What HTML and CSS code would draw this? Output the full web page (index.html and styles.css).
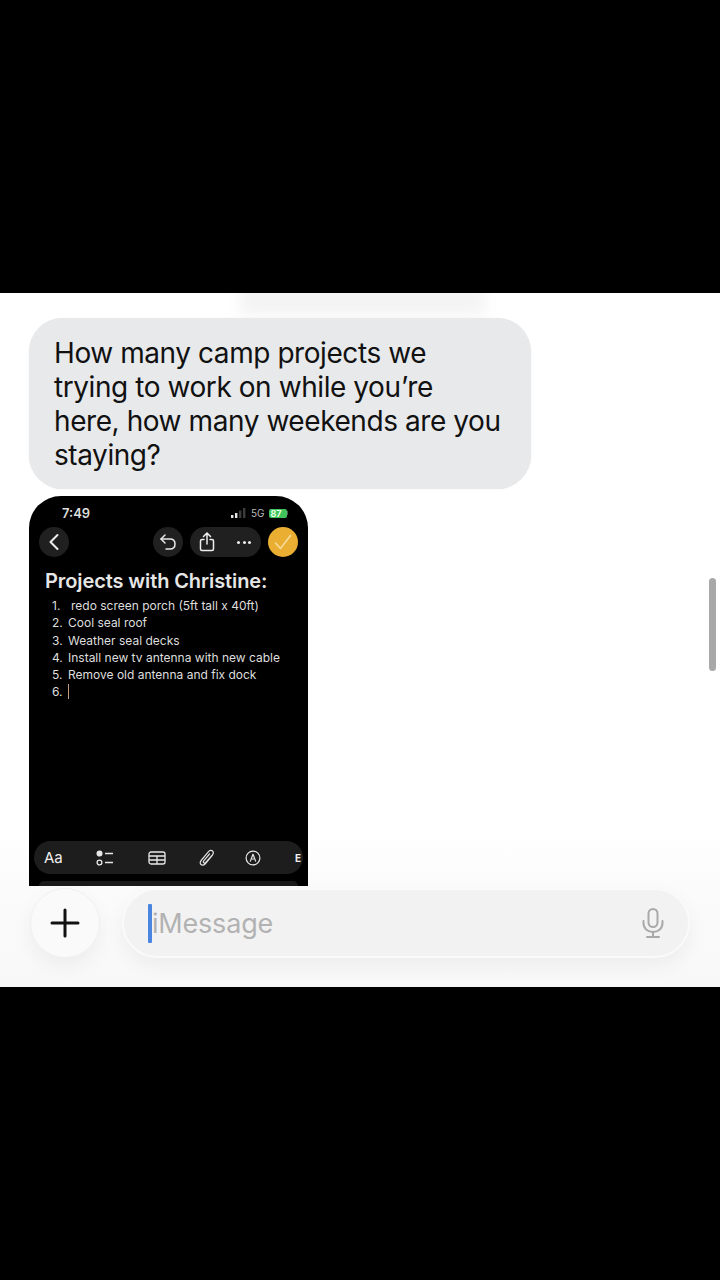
FILE: index.html
```html
<!DOCTYPE html>
<html lang="en">
<head>
<meta charset="utf-8">
<title>Messages</title>
<link rel="stylesheet" href="styles.css">
</head>
<body>
<div class="band-top"></div>
<main class="screen">
  <div class="top-glow"></div>
  <div class="thread">
    <p class="bubble">How many camp projects we<br>trying to work on while you’re<br>here, how many weekends are you<br>staying?</p>
    <div class="shot">
      <div class="status">
        <span class="time">7:49</span>
        <span class="status-right">
          <svg class="signal" width="16" height="10" viewBox="0 0 16 10"><rect x="0" y="7" width="2.4" height="3" fill="#e6e6e6"/><rect x="4" y="5" width="2.4" height="5" fill="#e6e6e6"/><rect x="8" y="2.5" width="2.4" height="7.5" fill="#3c3c3c"/><rect x="12" y="0" width="2.4" height="10" fill="#3c3c3c"/></svg>
          <span class="net">5G</span>
          <span class="batt">87</span><span class="batt-tip"></span>
        </span>
      </div>
      <div class="toolbar">
        <span class="round"><svg width="12" height="18" viewBox="0 0 12 18" fill="none" stroke="#eee" stroke-width="2" stroke-linecap="round" stroke-linejoin="round"><path d="M9.5 2 L2.5 9 L9.5 16"/></svg></span>
        <span class="tool-right">
          <span class="round"><svg width="18" height="18" viewBox="0 0 18 18" fill="none" stroke="#e8e8e8" stroke-width="1.5" stroke-linecap="round" stroke-linejoin="round"><path d="M6 2 L2 6 L6 10"/><path d="M2 6 H11 C14 6 16 8 16 11 C16 14 14 16 11 16 H7"/></svg></span>
          <span class="pill">
            <svg width="16" height="20" viewBox="0 0 16 20" fill="none" stroke="#eee" stroke-width="1.5" stroke-linecap="round" stroke-linejoin="round"><path d="M8 1.5 V12"/><path d="M4.5 4.5 L8 1 L11.5 4.5"/><path d="M5 7.5 H3 C2 7.5 1.5 8 1.5 9 V17 C1.5 18 2 18.5 3 18.5 H13 C14 18.5 14.5 18 14.5 17 V9 C14.5 8 14 7.5 13 7.5 H11"/></svg>
            <span class="dots"><i></i><i></i><i></i></span>
          </span>
          <span class="done"><svg width="18" height="16" viewBox="0 0 18 16" fill="none" stroke="#f6dc9a" stroke-width="1.6" stroke-linecap="round" stroke-linejoin="round"><path d="M1.5 9 L6.5 14.5 L16.5 1.5"/></svg></span>
        </span>
      </div>
      <h1 class="note-title">Projects with Christine:</h1>
      <ol class="note-list">
        <li><span class="n">1.</span><span class="first">redo screen porch (5ft tall x 40ft)</span></li>
        <li><span class="n">2.</span><span>Cool seal roof</span></li>
        <li><span class="n">3.</span><span>Weather seal decks</span></li>
        <li><span class="n">4.</span><span>Install new tv antenna with new cable</span></li>
        <li><span class="n">5.</span><span>Remove old antenna and fix dock</span></li>
        <li><span class="n">6.</span><span class="text-caret"></span></li>
      </ol>
      <div class="format-bar">
        <span class="aa">Aa</span>
        <svg class="f-list" width="18" height="16" viewBox="0 0 18 16" fill="none" stroke="#e8e8e8" stroke-width="1.3"><circle cx="3.5" cy="3.5" r="2.4" fill="#e8e8e8"/><circle cx="3.5" cy="12.5" r="2.4"/><path d="M9 3.5 H17 M9 12.5 H17" stroke-width="1.6"/></svg>
        <svg class="f-table" width="18" height="14" viewBox="0 0 18 14" fill="none" stroke="#e8e8e8" stroke-width="1.3"><rect x="1" y="1" width="16" height="12" rx="2"/><path d="M1 5 H17 M1 9 H17 M9 5 V13"/></svg>
        <svg class="f-clip" width="16" height="18" viewBox="0 0 16 18" fill="none" stroke="#e0e0e0" stroke-width="1.2" stroke-linecap="round" stroke-linejoin="round"><path d="M13.5 6 L6.5 14.5 C5 16.3 3 16.5 2 15.5 C1 14.5 1 12.8 2.5 11 L9.5 2.7 C10.8 1.2 12.4 1 13.5 2 C14.6 3 14.6 4.4 13.4 5.9 L6.8 13.3 C6 14.2 5.1 14.2 4.6 13.7 C4.1 13.2 4.2 12.4 4.9 11.6 L10.5 5"/></svg>
        <svg class="f-pen" width="16" height="16" viewBox="0 0 16 16" fill="none" stroke="#e8e8e8" stroke-width="1.2" stroke-linejoin="round"><circle cx="8" cy="8" r="6.9"/><path d="M5.2 11.6 L8 4.2 L10.8 11.6" /><path d="M6.6 9 H9.4" stroke-width="1"/></svg>
        <span class="cut">E</span>
      </div>
      <div class="keyboard-edge"></div>
    </div>
  </div>
  <div class="composer">
    <button class="plus" type="button" aria-label="Add"><svg width="30" height="30" viewBox="0 0 30 30" fill="none" stroke="#111" stroke-width="3" stroke-linecap="round"><path d="M15 2 V28 M2 15 H28"/></svg></button>
    <div class="field">
      <span class="caret"></span>
      <span class="placeholder">iMessage</span>
      <svg class="mic" width="22" height="30" viewBox="0 0 22 30" fill="none" stroke="#a9a9a9" stroke-width="2" stroke-linecap="round"><rect x="6.5" y="1" width="9" height="18" rx="4.5"/><path d="M1.5 13 V15 C1.5 20.5 5.5 24 11 24 C16.5 24 20.5 20.5 20.5 15 V13"/><path d="M11 24 V29 M5 29 H17"/></svg>
    </div>
  </div>
  <div class="scrollbar"></div>
</main>
<div class="band-bottom"></div>
</body>
</html>
```
FILE: styles.css
```css
* { box-sizing: border-box; }
html, body { margin: 0; padding: 0; background: #000; }
body { width: 720px; height: 1280px; overflow: hidden; font-family: Inter, "Liberation Sans", sans-serif; display: flex; flex-direction: column; }
.band-top { height: 293px; background: #000; flex: none; }
.band-bottom { flex: 1; background: #000; }
.screen { position: relative; height: 694px; flex: none; background: #fff; overflow: hidden; display: flex; flex-direction: column; }
.thread { position: relative; padding: 25px 0 0 29px; height: 593px; overflow: hidden; flex: none; background: linear-gradient(#fff 540px, #fbfbfb 593px); }
.top-glow { position: absolute; z-index: 1; left: 240px; top: -6px; width: 245px; height: 28px; background: #f3f3f3; filter: blur(8px); }
.bubble { position: relative; z-index: 2; margin: 0; width: 502px; height: 171px; padding: 18px 20px 18px 25px; border-radius: 34px; background: #e8e9eb; color: #111; font-size: 28px; line-height: 34px; letter-spacing: -0.43px; white-space: nowrap; box-shadow: 0 0 1px #ddd; }
.shot { margin-top: 7px; width: 279px; height: 390px; background: #000; color: #e9e9e9; border-radius: 32px 32px 0 0; overflow: hidden; display: flex; flex-direction: column; padding: 0 10px 0 10px; }
.status { height: 31px; flex: none; display: flex; justify-content: space-between; align-items: center; padding: 3px 10px 0 23px; }
.time { font-size: 13px; font-weight: 600; color: #dcdcdc; }
.status-right { display: flex; align-items: center; gap: 4px; }
.net { font-size: 10px; color: #bbb; }
.batt { font-size: 9px; font-weight: 700; line-height: 9px; background: #3fc35a; color: #e8ffe8; border-radius: 2px; padding: 0 2px; width: 18px; height: 9px; }
.batt-tip { width: 1.5px; height: 4px; background: #555; margin-left: -4px; }
.toolbar { display: flex; justify-content: space-between; align-items: center; height: 30px; flex: none; }
.tool-right { display: flex; align-items: center; gap: 7px; }
.round { width: 30px; height: 30px; border-radius: 50%; background: #202020; display: flex; align-items: center; justify-content: center; }
.pill { width: 71px; height: 30px; border-radius: 15px; background: #202020; display: flex; align-items: center; justify-content: space-between; padding: 0 10px 0 9px; }
.dots { display: flex; gap: 2.5px; }
.dots i { width: 3px; height: 3px; border-radius: 50%; background: #eee; }
.done { width: 30px; height: 30px; border-radius: 50%; background: #e9ae32; display: flex; align-items: center; justify-content: center; }
.note-title { margin: 11px 0 0 6px; font-size: 20px; line-height: 26px; font-weight: 600; letter-spacing: -0.1px; color: #e6e6e6; white-space: nowrap; }
.note-list { list-style: none; margin: 3px 0 0 13px; padding: 0; font-size: 12px; line-height: 17.25px; color: #dedede; flex: 1; }
.note-list li { display: flex; }
.n { width: 16px; flex: none; }
.first { margin-left: 3px; }
.text-caret { display: block; width: 1px; height: 15px; margin-top: 1px; background: #c49b7c; }
.format-bar { flex: none; height: 33px; margin: 0 -5px; width: 269px; background: #1d1d1d; border-radius: 17px; display: flex; align-items: center; padding: 0 0 0 10px; color: #eee; }
.aa { font-size: 15px; width: 18px; flex: none; }
.f-list { margin-left: 34px; flex: none; }
.f-table { margin-left: 34px; flex: none; }
.f-clip { margin-left: 33px; flex: none; }
.f-pen { margin-left: 30px; flex: none; }
.cut { font-size: 10px; font-weight: 700; margin-left: 34px; flex: none; }
.keyboard-edge { flex: none; height: 5px; margin: 7px 0 0; background: #1a1a1a; border-radius: 12px 12px 0 0; }
.composer { position: relative; flex: 1; background: linear-gradient(#fbfbfb, #f8f8f8); display: flex; gap: 22px; padding: 2px 30px 0 30px; }
.plus { width: 70px; height: 70px; border-radius: 50%; background: #fafafa; border: 1px solid #f1f1f1; display: flex; align-items: center; justify-content: center; padding: 0; box-shadow: 0 8px 20px rgba(0,0,0,0.05); }
.field { flex: 1; height: 70px; border-radius: 35px; background: #f2f2f2; border: 2px solid #fafafa; display: flex; align-items: center; padding: 0 24px 0 24px; box-shadow: 0 8px 20px rgba(0,0,0,0.05); }
.caret { width: 4px; height: 39px; background: #4a86e0; border-radius: 1px; flex: none; }
.placeholder { font-size: 27px; color: #b2b2b2; flex: 1; letter-spacing: -0.2px; }
.scrollbar { position: absolute; left: 708.5px; top: 285px; width: 7px; height: 93px; border-radius: 3.5px; background: #a8a8a8; }
```
